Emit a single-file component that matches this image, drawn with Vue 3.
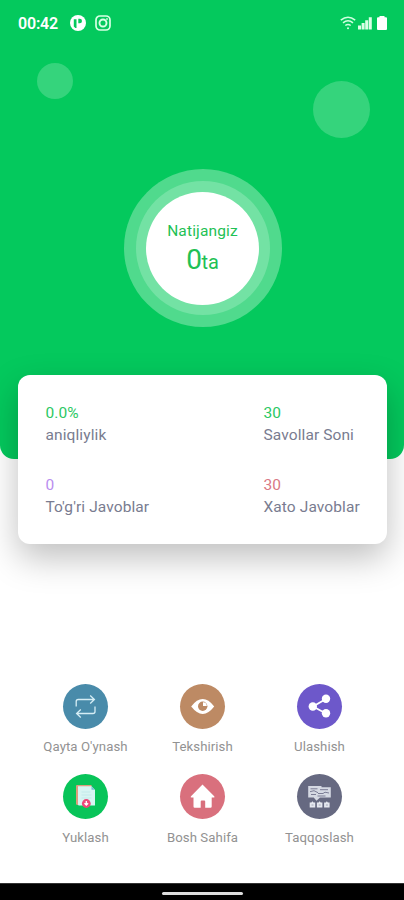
<script setup>
const stats = [
  { value: '0.0%', label: 'aniqliylik', tone: 'green' },
  { value: '30', label: 'Savollar Soni', tone: 'green' },
  { value: '0', label: "To'g'ri Javoblar", tone: 'purple' },
  { value: '30', label: 'Xato Javoblar', tone: 'red' },
]
const actions = [
  { id: 'replay', label: "Qayta O'ynash" },
  { id: 'review', label: 'Tekshirish' },
  { id: 'share', label: 'Ulashish' },
  { id: 'download', label: 'Yuklash' },
  { id: 'home', label: 'Bosh Sahifa' },
  { id: 'compare', label: 'Taqqoslash' },
]
</script>

<template>
  <main class="screen">
    <header class="hero">
      <div class="status">
        <span class="clock">00:42</span>
        <svg class="app-icon" viewBox="0 0 16 16">
          <circle cx="8" cy="8" r="8" fill="#fff" />
          <path d="M3.800 4.200h2.700v8.800H5.300l-1.500-1.600zM8.300 3.800h1.500a2.200 2.200 0 0 1 0 4.400H8.300z" fill="#04c95d" />
        </svg>
        <svg class="insta" viewBox="0 0 16 16" fill="none" stroke="#d9ffe4">
          <rect x="1" y="1" width="14" height="14" rx="4" stroke-width="1.700" />
          <circle cx="8" cy="8" r="3.500" stroke-width="1.900" />
          <circle cx="12" cy="4" r=".7" stroke-width=".8" />
        </svg>
        <span class="spacer"></span>
        <svg class="wifi" viewBox="0 0 16 14" fill="none" stroke="#d0ffdf" stroke-width="1.500">
          <path d="M.8 4.200Q8-1.800 15.200 4.200M3 6.900q5-4.200 10 0M5.300 9.500q2.700-2.200 5.400 0" />
          <circle cx="8" cy="12.300" r="1" fill="#d9ffe4" stroke="none" />
        </svg>
        <svg class="signal" viewBox="0 0 14 13" fill="#dcffe7">
          <path d="M0 8.500h3v4H0zM3.600 6h3v6.500h-3zM7.200 3.300h3v9.200h-3zM10.800 .3h3v12.200h-3z" />
        </svg>
        <svg class="battery" viewBox="0 0 10 14" fill="#fff">
          <path d="M2.500 0h5v1.300H9q1 0 1 1V13q0 1-1 1H1q-1 0-1-1V2.300q0-1 1-1h1.500z" />
        </svg>
      </div>
      <i class="bubble small"></i>
      <i class="bubble large"></i>
      <div class="ring outer">
        <div class="ring middle">
          <div class="ring inner">
            <span class="score-title">Natijangiz</span>
            <span class="score"><b>0</b>ta</span>
          </div>
        </div>
      </div>
    </header>

    <section class="card">
      <div v-for="s in stats" :key="s.label" class="stat">
        <span class="value" :class="s.tone">{{ s.value }}</span>
        <span class="label">{{ s.label }}</span>
      </div>
    </section>

    <nav class="actions">
      <div v-for="a in actions" :key="a.id" class="action">
        <span class="disc" :class="a.id">
          <svg v-if="a.id === 'replay'" viewBox="0 0 45 45" fill="none" stroke="#d5edf5" stroke-width="1.300">
            <path d="M13.200 22.500v-5q0-2 2-2H31M27.200 11.500l4.200 4-4.200 4M32 22.500v5q0 2-2 2H14M17.800 25.500l-4.200 4 4.200 4" />
          </svg>
          <svg v-else-if="a.id === 'review'" viewBox="0 0 45 45">
            <path d="M11.200 22.500Q22.700 7.700 34.200 22.500 22.700 37.300 11.200 22.500z" fill="#fff" />
            <circle cx="22.700" cy="22.300" r="4.700" fill="#bd8a64" />
            <path d="M23 22v-3.800a3.800 3.800 0 0 1 3.800 3.800z" fill="#fff" />
          </svg>
          <svg v-else-if="a.id === 'share'" viewBox="0 0 45 45" fill="#fff">
            <path d="M29 15 16 22.500 29 29.500" fill="none" stroke="#fff" stroke-width="1.800" />
            <circle cx="15.800" cy="22.500" r="4.200" /><circle cx="29" cy="14.800" r="4.200" /><circle cx="29" cy="29.300" r="4.200" />
          </svg>
          <svg v-else-if="a.id === 'download'" viewBox="0 0 45 45">
            <path d="M13 12q0-1 1-1h14.500V31H14.500q-1.500 0-1.500-1.500z" fill="#df9d7d" />
            <path d="M15 12.300h13.500l3.500 3.500V31.500H16q-1 0-1-1z" fill="#d8f5f3" />
            <path d="M28.500 12.300 32 15.800h-3.500z" fill="#72bfd0" />
            <path d="M18.500 18h9M18.500 21h10M18.500 24h10" stroke="#c3eaea" />
            <circle cx="23.300" cy="29.500" r="4.400" fill="#ed4779" />
            <path d="M23.300 27v3.300M21.500 29.200l1.800 1.800 1.800-1.800" fill="none" stroke="#fff" stroke-width="1.300" />
          </svg>
          <svg v-else-if="a.id === 'home'" viewBox="0 0 45 45">
            <path d="M22.500 10.500 34.200 22.200q1 1.300-.5 1.300H31.700v9q0 1.200-1.200 1.200h-5.300v-6.200q0-1-1-1h-2.500q-1 0-1 1v6.200h-6q-1.200 0-1.200-1.200v-9h-2q-1.500 0-.5-1.300z" fill="#fff" />
          </svg>
          <svg v-else viewBox="0 0 45 45">
            <path d="M11.200 12h13.300v1.300h9.300v10.200H23l-3.500 3.300-2.800-3.300h-5.500z" fill="#d5d9e3" />
            <path d="M13.500 14.800h7M13 17.700l4-1 4 2M14 20.500h5M23 15.700h8M21 19.500h5l2-1.300 4 .8M20.500 22h8" fill="none" stroke="#70738c" stroke-width=".9" />
            <path d="m15.400 27.300 1.100 1.300h1.700v5h-5.500v-5h1.700zM22.600 27.300l1.100 1.300h1.700v5h-5.500v-5h1.700zM29.800 27.300l1.100 1.300h1.700v5h-5.500v-5h1.700z" fill="#e5e7ef" />
            <path d="M14.500 31h2M21.700 31h2M28.900 31h2" stroke="#a2a6b7" stroke-width="1" />
          </svg>
        </span>
        <span class="caption">{{ a.label }}</span>
      </div>
    </nav>
    <footer class="system-nav"><i></i></footer>
  </main>
</template>

<style>
body { margin: 0; background: #fff; }
</style>
<style scoped>
* { box-sizing: border-box; }
.screen { width: 404px; height: 900px; display: flex; flex-direction: column; overflow: hidden; background: #fff; font-family: Roboto, sans-serif; }
.hero { position: relative; flex: none; height: 459px; border-radius: 0 0 14px 14px; background: #04c95d; }
.status { height: 46px; padding: 0 17px 0 18px; display: flex; align-items: center; }
.clock { width: 52px; color: #fff; font-size: 16px; font-weight: 600; letter-spacing: -.2px; line-height: 18px; padding-top: 2px; }
.app-icon { width: 16px; height: 16px; }
.insta { width: 16px; height: 16px; margin-left: 9px; }
.spacer { flex: 1; }
.wifi { width: 16px; height: 14px; }
.signal { width: 14px; height: 13px; margin-left: 2px; }
.battery { width: 10px; height: 14px; margin-left: 5px; }
.bubble { position: absolute; border-radius: 50%; background: #35d47c; }
.small { left: 36.500px; top: 63px; width: 36px; height: 36px; }
.large { left: 312.500px; top: 81px; width: 57px; height: 57px; }
.ring { display: flex; align-items: center; justify-content: center; border-radius: 50%; }
.outer { width: 158px; height: 158px; margin: 123px 0 0 123.500px; background: #50da8d; }
.middle { width: 134px; height: 134px; background: #73e2a4; }
.inner { flex-direction: column; width: 113px; height: 113px; background: #fff; color: #1fc155; }
.score-title { font-size: 15.500px; line-height: 18px; letter-spacing: .15px; margin-top: 4px; }
.score { display: flex; align-items: baseline; font-size: 20px; line-height: 32px; margin-top: 4px; }
.score b { font-size: 28px; font-weight: 400; letter-spacing: -.5px; }
.card { position: relative; flex: none; width: 369px; height: 169px; margin: -84px 0 0 18px; padding: 27px 0 0 27.500px; display: grid; grid-template-columns: 218px 1fr; grid-template-rows: 72px 72px; border-radius: 12px; background: #fff; box-shadow: 0 14px 34px rgba(0, 0, 0, .25); }
.stat { display: flex; flex-direction: column; font-size: 15.500px; line-height: 22px; letter-spacing: .1px; white-space: nowrap; }
.label { color: #797c90; }
.green { color: #2bc863; }
.purple { color: #b98eef; }
.red { color: #d97884; }
.actions { flex: 1; display: grid; grid-template-columns: repeat(3, 117px); grid-template-rows: 90.500px 90.500px; margin-top: 139.500px; padding-left: 27px; }
.action { display: flex; flex-direction: column; align-items: center; }
.disc { width: 45px; height: 45px; border-radius: 50%; }
.disc svg { display: block; width: 45px; height: 45px; }
.replay { background: #498baa; }
.review { background: #bd8a64; }
.share { background: #6d58ca; }
.download { background: #08c459; }
.home { background: #d9707d; }
.compare { background: #666981; }
.caption { margin-top: 9.500px; color: #929292; font-size: 13.200px; line-height: 18px; letter-spacing: .08px; white-space: nowrap; }
.system-nav { flex: none; height: 17px; background: #000; border-top: 1px solid #333; display: flex; justify-content: center; padding-top: 8px; }
.system-nav i { width: 81px; height: 2.500px; border-radius: 2px; background: #ddd; }
</style>
